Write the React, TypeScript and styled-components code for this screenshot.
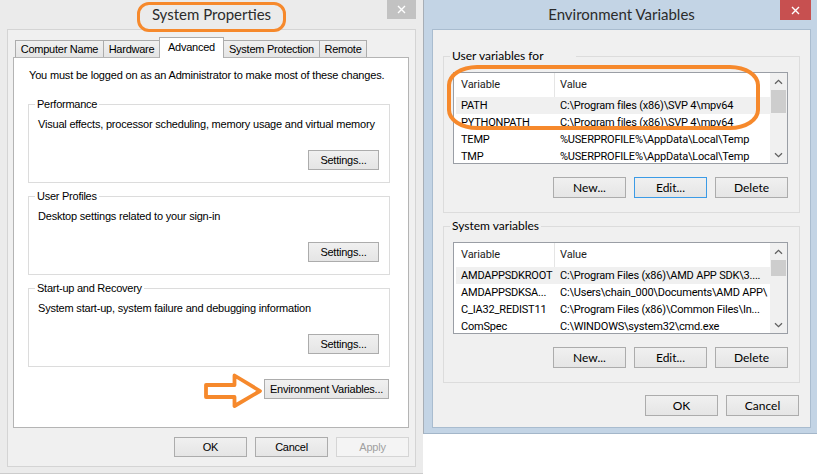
import styled, { createGlobalStyle } from "styled-components";

const classic = `"Liberation Sans", Arial, sans-serif`;
const modern = `Lato, "Open Sans", sans-serif`;
const listFont = `Roboto, "Liberation Sans", sans-serif`;
const orange = "#f6892c";

const GlobalStyle = createGlobalStyle`
  html, body {
    margin: 0;
    padding: 0;
    background: #ffffff;
  }
  body {
    overflow: hidden;
  }
`;

const Desktop = styled.div`
  display: flex;
  align-items: flex-start;
  width: 817px;
  height: 474px;
  overflow: hidden;
  background: #ffffff;
`;

const Window = styled.div<{ $active?: boolean; $w: number; $h: number }>`
  box-sizing: border-box;
  display: flex;
  flex-direction: column;
  flex: none;
  width: ${(p) => p.$w}px;
  height: ${(p) => p.$h}px;
  padding: ${(p) => (p.$active ? "0 6px 5px 8px" : "0 7px 6px 7px")};
  background: ${(p) => (p.$active ? "#c3d4e5" : "#ebebeb")};
  border-bottom: 1px solid ${(p) => (p.$active ? "#a3b6c9" : "#cccccc")};
  border-left: ${(p) => (p.$active ? "1px solid #a7aeb6" : "none")};
`;

const TitleBar = styled.div`
  position: relative;
  z-index: 2;
  display: grid;
  grid-template-columns: 1fr auto 1fr;
  grid-template-rows: 29px;
  height: 29px;
  flex: none;
`;

const Title = styled.span<{ $circled?: boolean }>`
  grid-column: 2;
  align-self: start;
  margin-top: 2px;
  padding: 0 12px 5px;
  border: 3px solid ${(p) => (p.$circled ? orange : "transparent")};
  border-radius: 12px;
  font: 15px/19px ${modern};
  color: #2b2b2b;
  white-space: nowrap;
`;

const CloseButton = styled.div<{ $active?: boolean }>`
  grid-column: 3;
  justify-self: end;
  align-self: start;
  display: flex;
  align-items: center;
  justify-content: center;
  width: ${(p) => (p.$active ? 31 : 29)}px;
  height: ${(p) => (p.$active ? 20 : 19)}px;
  background: ${(p) => (p.$active ? "#c75050" : "#c2c2c2")};
`;

const Client = styled.div<{ $active?: boolean }>`
  flex: 1;
  display: flex;
  flex-direction: column;
  box-sizing: border-box;
  min-height: 0;
  background: #f0f0f0;
  border: 1px solid ${(p) => (p.$active ? "#a9bccf" : "#d4d4d4")};
  padding: ${(p) => (p.$active ? "19px 10px 0 10px" : "7px 6px 9px 5px")};
`;

const TabStrip = styled.div`
  position: relative;
  z-index: 1;
  display: flex;
  align-items: flex-end;
  height: 20px;
  margin-left: 2px;
`;

const Tab = styled.div<{ $selected?: boolean; $w: number }>`
  position: relative;
  z-index: ${(p) => (p.$selected ? 1 : 0)};
  box-sizing: border-box;
  width: ${(p) => p.$w}px;
  height: ${(p) => (p.$selected ? 21 : 17)}px;
  margin-bottom: ${(p) => (p.$selected ? -1 : 0)}px;
  padding-top: ${(p) => (p.$selected ? 2 : 1)}px;
  border: 1px solid #acacac;
  border-bottom: none;
  background: ${(p) => (p.$selected ? "#ffffff" : "linear-gradient(#f0f0f0, #e5e5e5)")};
  font: 11px/15px ${classic};
  letter-spacing: -0.25px;
  text-align: center;
  white-space: nowrap;
  color: #000;

  & + & {
    margin-left: -1px;
  }
`;

const TabPanel = styled.div`
  box-sizing: border-box;
  display: flex;
  flex-direction: column;
  height: 371px;
  padding: 11px 18px 0 14px;
  background: #ffffff;
  border: 1px solid #b4b4b4;
`;

const Notice = styled.div`
  margin: 0 0 15px 1px;
  font: 11px/13px ${classic};
  letter-spacing: -0.18px;
  color: #000;
  white-space: nowrap;
`;

const GroupBox = styled.fieldset<{ $h: number; $modern?: boolean }>`
  box-sizing: border-box;
  display: flex;
  flex-direction: column;
  min-width: 0;
  height: ${(p) => p.$h}px;
  margin: 0;
  padding: ${(p) => (p.$modern ? "0 11px 15px 9px" : "0 10px 0 9px")};
  border: 1px solid #dcdcdc;

  & + & {
    margin-top: 6px;
  }
`;

const Legend = styled.legend<{ $modern?: boolean; $tail?: number }>`
  margin-left: -3px;
  padding: 0 ${(p) => 2 + (p.$tail ?? 0)}px 0 2px;
  font: ${(p) => (p.$modern ? `12px/14px ${modern}` : `11px/14px ${classic}`)};
  letter-spacing: ${(p) => (p.$modern ? "0" : "-0.25px")};
  color: #000;
  white-space: nowrap;
`;

const Description = styled.div`
  margin-top: 7px;
  font: 11px/13px ${classic};
  letter-spacing: -0.2px;
  color: #000;
  white-space: nowrap;
`;

const ButtonRow = styled.div<{ $top: number; $right?: number }>`
  display: flex;
  justify-content: flex-end;
  align-items: center;
  gap: 8px;
  margin-top: ${(p) => p.$top}px;
  margin-right: ${(p) => p.$right ?? 0}px;
`;

const Button = styled.button<{ $w: number; $focused?: boolean; $modern?: boolean }>`
  box-sizing: border-box;
  flex: none;
  width: ${(p) => p.$w}px;
  height: ${(p) => (p.$modern ? 21 : 20)}px;
  margin: 0;
  padding: 0;
  border: 1px solid ${(p) => (p.$focused ? "#3c9be6" : "#acacac")};
  border-radius: 0;
  background: linear-gradient(#f0f0f0, #e5e5e5);
  font: ${(p) => (p.$modern ? `12px/18px ${modern}` : `11px/18px ${classic}`)};
  letter-spacing: ${(p) => (p.$modern ? "0" : "-0.25px")};
  color: #000;
  white-space: nowrap;

  &:disabled {
    border-color: #d5d5d5;
    background: #f4f4f4;
    color: #a0a0a0;
  }
`;

const Arrow = styled.svg`
  flex: none;
  overflow: visible;
  margin-right: -7px;
`;

const ListWrap = styled.div`
  position: relative;
  margin-top: 9px;
`;

const ListBox = styled.div`
  box-sizing: border-box;
  display: flex;
  height: 92px;
  overflow: hidden;
  background: #ffffff;
  border: 1px solid #9a9ea5;
`;

const ListBody = styled.div`
  flex: 1;
  min-width: 0;
  overflow: hidden;
`;

const HeaderRow = styled.div`
  display: grid;
  grid-template-columns: 101px 1fr;
  height: 24px;
  font: 11px/24px ${listFont};
  letter-spacing: -0.1px;
  color: #1e1e1e;
`;

const HeaderCell = styled.div<{ $first?: boolean }>`
  padding-left: ${(p) => (p.$first ? 7 : 5)}px;
  border-right: ${(p) => (p.$first ? "1px solid #e5e5e5" : "none")};
`;

const Row = styled.div<{ $selected?: boolean }>`
  display: grid;
  grid-template-columns: 99px 1fr;
  height: 17px;
  margin-left: 2px;
  background: ${(p) => (p.$selected ? "#f0f0f0" : "transparent")};
  font: 11px/17px ${listFont};
  letter-spacing: -0.2px;
  color: #000;
`;

const Cell = styled.div`
  padding-left: 5px;
  overflow: hidden;
  white-space: nowrap;
`;

const ScrollBar = styled.div`
  display: flex;
  flex-direction: column;
  flex: none;
  width: 17px;
  background: #f0f0f0;
`;

const ScrollArrow = styled.div<{ $down?: boolean }>`
  display: flex;
  align-items: center;
  justify-content: center;
  flex: none;
  height: 17px;
  margin-top: ${(p) => (p.$down ? "auto" : "0")};
`;

const Thumb = styled.div<{ $h: number }>`
  flex: none;
  height: ${(p) => p.$h}px;
  margin: 0 1px;
  background: #cdcdcd;
`;

const Highlight = styled.div`
  position: absolute;
  left: -6px;
  top: -7px;
  width: 313px;
  height: 65px;
  box-sizing: border-box;
  border: 4px solid ${orange};
  border-radius: 30px / 20px;
  pointer-events: none;
`;

function CloseGlyph() {
  return (
    <svg width="9" height="9" viewBox="0 0 9 9">
      <path d="M1 1 L8 8 M8 1 L1 8" stroke="#ffffff" strokeWidth="1.4" fill="none" />
    </svg>
  );
}

function Chevron({ down }: { down?: boolean }) {
  return (
    <svg width="9" height="6" viewBox="0 0 9 6">
      <path
        d={down ? "M1 1.2 L4.5 4.6 L8 1.2" : "M1 4.8 L4.5 1.4 L8 4.8"}
        stroke="#606060"
        strokeWidth="1.3"
        fill="none"
      />
    </svg>
  );
}

type Variable = { name: string; value: string; selected?: boolean };

const userVars: Variable[] = [
  { name: "PATH", value: "C:\\Program files (x86)\\SVP 4\\mpv64", selected: true },
  { name: "PYTHONPATH", value: "C:\\Program files (x86)\\SVP 4\\mpv64" },
  { name: "TEMP", value: "%USERPROFILE%\\AppData\\Local\\Temp" },
  { name: "TMP", value: "%USERPROFILE%\\AppData\\Local\\Temp" },
];

const systemVars: Variable[] = [
  { name: "AMDAPPSDKROOT", value: "C:\\Program Files (x86)\\AMD APP SDK\\3....", selected: true },
  { name: "AMDAPPSDKSA...", value: "C:\\Users\\chain_000\\Documents\\AMD APP\\" },
  { name: "C_IA32_REDIST11", value: "C:\\Program Files (x86)\\Common Files\\In..." },
  { name: "ComSpec", value: "C:\\WINDOWS\\system32\\cmd.exe" },
];

function VariableList({ rows, thumb }: { rows: Variable[]; thumb: number }) {
  return (
    <ListBox>
      <ListBody>
        <HeaderRow>
          <HeaderCell $first>Variable</HeaderCell>
          <HeaderCell>Value</HeaderCell>
        </HeaderRow>
        {rows.map((r) => (
          <Row key={r.name} $selected={r.selected}>
            <Cell>{r.name}</Cell>
            <Cell>{r.value}</Cell>
          </Row>
        ))}
      </ListBody>
      <ScrollBar>
        <ScrollArrow>
          <Chevron />
        </ScrollArrow>
        <Thumb $h={thumb} />
        <ScrollArrow $down>
          <Chevron down />
        </ScrollArrow>
      </ScrollBar>
    </ListBox>
  );
}

const tabs = [
  { label: "Computer Name", w: 89 },
  { label: "Hardware", w: 57 },
  { label: "Advanced", w: 65, selected: true },
  { label: "System Protection", w: 97 },
  { label: "Remote", w: 48 },
];

const groups = [
  { title: "Performance", text: "Visual effects, processor scheduling, memory usage and virtual memory" },
  { title: "User Profiles", text: "Desktop settings related to your sign-in" },
  { title: "Start-up and Recovery", text: "System start-up, system failure and debugging information" },
];

function SystemProperties() {
  return (
    <Window $w={423} $h={474}>
      <TitleBar>
        <Title $circled>System Properties</Title>
        <CloseButton>
          <CloseGlyph />
        </CloseButton>
      </TitleBar>
      <Client>
        <TabStrip>
          {tabs.map((t) => (
            <Tab key={t.label} $w={t.w} $selected={t.selected}>
              {t.label}
            </Tab>
          ))}
        </TabStrip>
        <TabPanel>
          <Notice>You must be logged on as an Administrator to make most of these changes.</Notice>
          {groups.map((g) => (
            <GroupBox key={g.title} $h={86}>
              <Legend>{g.title}</Legend>
              <Description>{g.text}</Description>
              <ButtonRow $top={19}>
                <Button $w={71}>Settings...</Button>
              </ButtonRow>
            </GroupBox>
          ))}
          <ButtonRow $top={4} $right={1}>
            <Arrow width="60" height="36" viewBox="0 0 60 36">
              <path
                d="M3 14 L31.5 14 L31.5 4.5 L57 20 L31.5 35 L31.5 26 L3 26 Z"
                fill="none"
                stroke={orange}
                strokeWidth="3.8"
                strokeLinejoin="round"
              />
            </Arrow>
            <Button $w={125}>Environment Variables...</Button>
          </ButtonRow>
        </TabPanel>
        <ButtonRow $top={9}>
          <Button $w={73}>OK</Button>
          <Button $w={73}>Cancel</Button>
          <Button $w={73} disabled>
            Apply
          </Button>
        </ButtonRow>
      </Client>
    </Window>
  );
}

function EnvironmentVariables() {
  return (
    <Window $active $w={394} $h={434}>
      <TitleBar>
        <Title>Environment Variables</Title>
        <CloseButton $active>
          <CloseGlyph />
        </CloseButton>
      </TitleBar>
      <Client $active>
        <GroupBox $h={164} $modern>
          <Legend $modern $tail={30}>
            User variables for
          </Legend>
          <ListWrap>
            <VariableList rows={userVars} thumb={23} />
            <Highlight />
          </ListWrap>
          <ButtonRow $top={13}>
            <Button $modern $w={73}>New...</Button>
            <Button $modern $w={73} $focused>
              Edit...
            </Button>
            <Button $modern $w={73}>Delete</Button>
          </ButtonRow>
        </GroupBox>
        <GroupBox $h={164} $modern>
          <Legend $modern>System variables</Legend>
          <ListWrap>
            <VariableList rows={systemVars} thumb={16} />
          </ListWrap>
          <ButtonRow $top={13}>
            <Button $modern $w={73}>New...</Button>
            <Button $modern $w={73}>Edit...</Button>
            <Button $modern $w={73}>Delete</Button>
          </ButtonRow>
        </GroupBox>
        <ButtonRow $top={12} $right={1}>
          <Button $modern $w={73}>OK</Button>
          <Button $modern $w={73}>Cancel</Button>
        </ButtonRow>
      </Client>
    </Window>
  );
}

export default function App() {
  return (
    <>
      <GlobalStyle />
      <Desktop>
        <SystemProperties />
        <EnvironmentVariables />
      </Desktop>
    </>
  );
}
